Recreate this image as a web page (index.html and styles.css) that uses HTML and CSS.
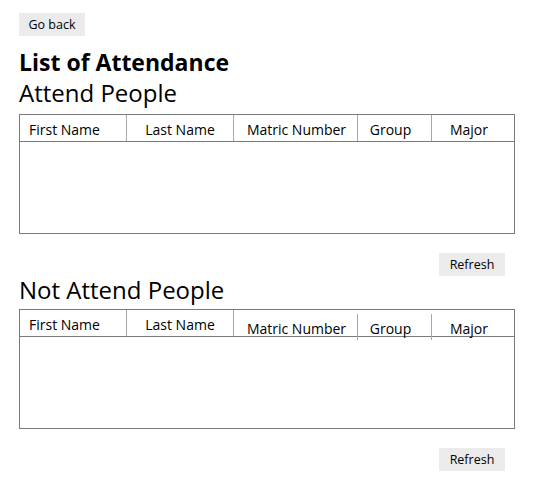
FILE: index.html
```html
<!DOCTYPE html>
<html>
<head>
<meta charset="utf-8">
<link rel="stylesheet" href="styles.css">
</head>
<body>
<div class="page">
  <button class="btn back">Go back</button>
  <h1 class="title">List of Attendance</h1>

  <h2 class="section">Attend People</h2>
  <div class="grid">
    <div class="head">
      <div class="cell c1">First Name</div>
      <div class="cell c2">Last Name</div>
      <div class="cell c3">Matric Number</div>
      <div class="cell c4">Group</div>
      <div class="cell c5">Major</div>
    </div>
    <div class="body"></div>
  </div>
  <div class="actions"><button class="btn refresh">Refresh</button></div>

  <h2 class="section second">Not Attend People</h2>
  <div class="grid">
    <div class="head">
      <div class="cell c1">First Name</div>
      <div class="cell c2">Last Name</div>
      <div class="cell c3 dropped">Matric Number</div>
      <div class="cell c4 dropped">Group</div>
      <div class="cell c5 dropped">Major</div>
    </div>
    <div class="body"></div>
  </div>
  <div class="actions"><button class="btn refresh">Refresh</button></div>
</div>
</body>
</html>
```

FILE: styles.css
```css
html, body {
  margin: 0;
  padding: 0;
  background: #ffffff;
}

.page {
  padding: 13px 0 0 19px;
  font-family: "Open Sans", "Noto Sans", sans-serif;
  color: #000000;
}

.btn {
  display: block;
  border: none;
  background: #ebebeb;
  font-family: "Open Sans", "Noto Sans", sans-serif;
  font-size: 12.5px;
  color: #000000;
  width: 66px;
  height: 23px;
  padding: 0;
  margin: 0;
}

.title {
  margin: 0;
  margin-top: 11px;
  font-size: 23px;
  line-height: 30px;
  font-weight: 700;
}

.section {
  margin: 0;
  font-size: 24px;
  line-height: 32px;
  font-weight: 400;
  height: 37px;
  box-sizing: border-box;
}

.second {
  line-height: 28px;
  height: 33px;
}

.grid {
  width: 496px;
  height: 120px;
  box-sizing: border-box;
  border: 1px solid #7a7a7a;
  display: flex;
  flex-direction: column;
}

.head {
  display: flex;
  height: 27px;
  box-sizing: border-box;
  border-bottom: 1px solid #7a7a7a;
}

.cell {
  height: 26px;
  box-sizing: border-box;
  border-right: 1px solid #a8a8a8;
  font-size: 14px;
  line-height: 23px;
  padding-top: 3px;
  text-align: center;
  white-space: nowrap;
}

.c1 { width: 107px; text-align: left; padding-left: 9px; }
.c2 { width: 107px; }
.c3 { width: 124px; padding-left: 2px; }
.c4 { width: 74px; padding-right: 8px; }
.c5 { width: 82px; border-right: none; padding-right: 8px; }

.dropped {
  margin-top: 4px;
  position: relative;
}

.body {
  flex: 1;
}

.actions {
  width: 496px;
  display: flex;
  justify-content: flex-end;
  padding-right: 10px;
  box-sizing: border-box;
  margin-top: 19px;
}

.refresh {
  height: 23px;
  width: 66px;
}
```
